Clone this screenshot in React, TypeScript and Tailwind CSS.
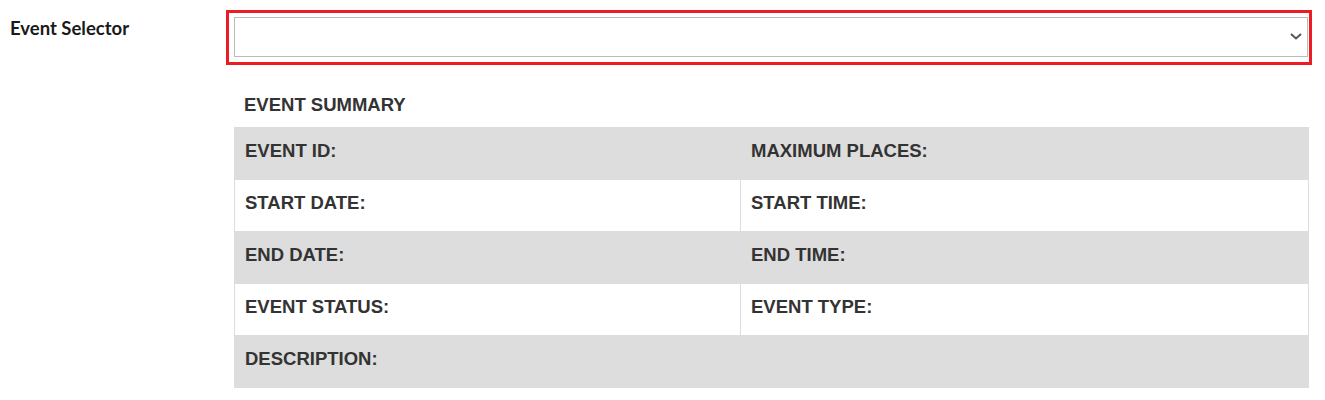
import React from "react";

const ROWS: { left: string; right?: string }[] = [
  { left: "EVENT ID:", right: "MAXIMUM PLACES:" },
  { left: "START DATE:", right: "START TIME:" },
  { left: "END DATE:", right: "END TIME:" },
  { left: "EVENT STATUS:", right: "EVENT TYPE:" },
  { left: "DESCRIPTION:" },
];

export default function App() {
  return (
    <div className="w-[1325px] h-[400px] bg-white flex">
      <div className="w-[226px] shrink-0 pl-[10px] pt-[15px]">
        <label className="text-[18.5px] font-bold text-[#1a1a1a] font-['Lato',sans-serif] leading-[26px]">
          Event Selector
        </label>
      </div>

      <div className="w-[1086px] pt-[10px]">
        <div className="border-[3px] border-[#ed1c24] pl-[5px] pr-[1px] pt-[4px] pb-[5px]">
          <div className="relative h-[40px] border border-[#bbbbbb] bg-white">
            <svg
              className="absolute right-[5px] top-[13px]"
              width="12"
              height="10"
              viewBox="0 0 12 10"
              fill="none"
            >
              <path d="M1 3 L6 7.5 L11 3" stroke="#555" strokeWidth="2" />
            </svg>
          </div>
        </div>

        <div className="w-[1075px] ml-[8px] mt-[26px] font-['Liberation_Sans',Arial,sans-serif] text-[#333333]">
          <div className="pl-[10px] pt-[2px] h-[36px] text-[18.5px] font-bold leading-[24px]">
            EVENT SUMMARY
          </div>
          <table className="w-full border-collapse text-[18.5px] font-bold">
            <tbody>
              {ROWS.map((r, i) => (
                <tr key={r.left} className={i % 2 === 0 ? "bg-[#dddddd]" : "bg-white"}>
                  {r.right ? (
                    <>
                      <td className="w-[506px] h-[52px] px-[10px] pb-[6px] border border-[#dddddd] align-middle">
                        {r.left}
                      </td>
                      <td className="h-[52px] px-[10px] pb-[6px] border border-[#dddddd] align-middle">
                        {r.right}
                      </td>
                    </>
                  ) : (
                    <td colSpan={2} className="h-[52px] px-[10px] pb-[6px] border border-[#dddddd] align-middle">
                      {r.left}
                    </td>
                  )}
                </tr>
              ))}
            </tbody>
          </table>
        </div>
      </div>
    </div>
  );
}
